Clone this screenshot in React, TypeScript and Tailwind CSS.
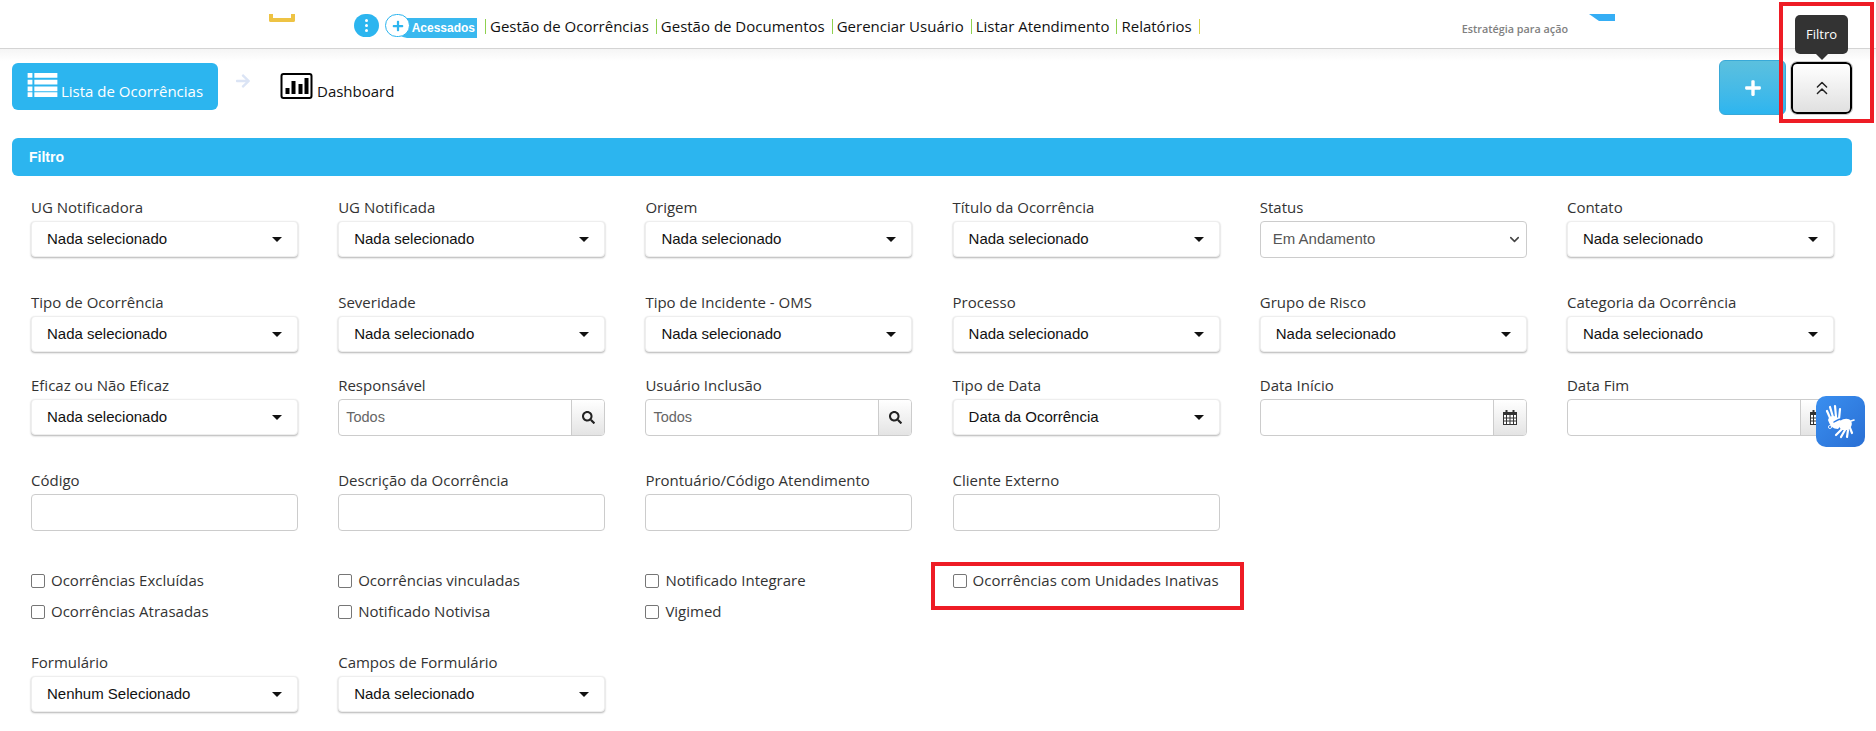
import { ChevronDown, ChevronsUp } from 'lucide-react';
import { FaArrowRight, FaPlus, FaSearch } from 'react-icons/fa';

const sans = "font-['Open_Sans',sans-serif]";
const arial = "font-['Liberation_Sans',sans-serif]";

type Field =
  | { kind: 'select'; label: string; value?: string }
  | { kind: 'native'; label: string; value: string }
  | { kind: 'search'; label: string }
  | { kind: 'date'; label: string }
  | { kind: 'text'; label: string };

const s = (label: string, value?: string): Field => ({ kind: 'select', label, value });

const rows: { height: string; fields: Field[] }[] = [
  {
    height: 'h-[95px]',
    fields: [
      s('UG Notificadora'),
      s('UG Notificada'),
      s('Origem'),
      s('Título da Ocorrência'),
      { kind: 'native', label: 'Status', value: 'Em Andamento' },
      s('Contato'),
    ],
  },
  {
    height: 'h-[83px]',
    fields: [
      s('Tipo de Ocorrência'),
      s('Severidade'),
      s('Tipo de Incidente - OMS'),
      s('Processo'),
      s('Grupo de Risco'),
      s('Categoria da Ocorrência'),
    ],
  },
  {
    height: 'h-[95px]',
    fields: [
      s('Eficaz ou Não Eficaz'),
      { kind: 'search', label: 'Responsável' },
      { kind: 'search', label: 'Usuário Inclusão' },
      s('Tipo de Data', 'Data da Ocorrência'),
      { kind: 'date', label: 'Data Início' },
      { kind: 'date', label: 'Data Fim' },
    ],
  },
  {
    height: 'h-[91px]',
    fields: [
      { kind: 'text', label: 'Código' },
      { kind: 'text', label: 'Descrição da Ocorrência' },
      { kind: 'text', label: 'Prontuário/Código Atendimento' },
      { kind: 'text', label: 'Cliente Externo' },
    ],
  },
];

const checks = [
  ['Ocorrências Excluídas', 'Ocorrências Atrasadas'],
  ['Ocorrências vinculadas', 'Notificado Notivisa'],
  ['Notificado Integrare', 'Vigimed'],
  ['Ocorrências com Unidades Inativas'],
];

const navItems = ['Gestão de Ocorrências', 'Gestão de Documentos', 'Gerenciar Usuário', 'Listar Atendimento', 'Relatórios'];

function CalendarIcon() {
  return (
    <svg width="14" height="15" viewBox="0 0 14 15" fill="none" stroke="#333" strokeWidth="1">
      <rect x="0.5" y="2.5" width="13" height="12" fill="white" />
      <path d="M0 2h14v3H0z" fill="#333" stroke="none" />
      <path d="M3.5 5v9M7 5v9M10.5 5v9M0 8h14M0 11h14" />
      <path d="M3.5 0v3M10.5 0v3" strokeWidth="2" />
    </svg>
  );
}

function Control({ field }: { field: Field }) {
  if (field.kind === 'select') {
    return (
      <button className={`flex h-[36px] w-full items-center justify-between rounded-[4px] border border-[#eeeeee] bg-white pl-[15px] pr-[15px] text-[15px] text-[#111] shadow-[0_1px_2px_rgba(0,0,0,0.3)] ${arial}`}>
        <span>{field.value ?? 'Nada selecionado'}</span>
        <span className="h-0 w-0 border-x-[5px] border-t-[5px] border-x-transparent border-t-[#111]" />
      </button>
    );
  }
  if (field.kind === 'native') {
    return (
      <div className={`flex h-[37px] w-full items-center justify-between rounded-[4px] border border-[#ccc] bg-white pl-[12px] pr-[4px] text-[15px] text-[#555] ${arial}`}>
        <span>{field.value}</span>
        <ChevronDown size={15} strokeWidth={2.5} className="text-[#444]" />
      </div>
    );
  }
  if (field.kind === 'text') {
    return <div className="h-[37px] w-full rounded-[4px] border border-[#ccc] bg-white" />;
  }
  return (
    <div className="flex h-[37px] w-full overflow-hidden rounded-[4px] border border-[#ccc] bg-white">
      <div className={`flex flex-1 items-center pl-[7px] text-[14.5px] text-[#666] ${arial}`}>{field.kind === 'search' ? 'Todos' : ''}</div>
      <div className="flex w-[33px] items-center justify-center border-l border-[#ccc] bg-gradient-to-b from-white to-[#e4e4e4]">
        {field.kind === 'search' ? <FaSearch size={13} className="text-[#222]" /> : <CalendarIcon />}
      </div>
    </div>
  );
}

function Label({ text }: { text: string }) {
  return <div className="mb-[4px] h-[20px] text-[15px] leading-[20px] text-[#333]">{text}</div>;
}

function Checkbox({ label }: { label: string }) {
  return (
    <label className={`flex h-[31px] items-center gap-[6px] text-[15px] leading-none text-[#333] ${sans}`}>
      <span className="h-[14px] w-[14px] rounded-[2px] border border-[#767676] bg-white" />
      {label}
    </label>
  );
}

function HandsIcon() {
  return (
    <svg width="49" height="51" viewBox="0 0 49 51" fill="none" stroke="white" strokeLinecap="round">
      <path d="M15 24 11 15M17 21 14 11M20 21 19 10M23 23 24 13" strokeWidth="2.2" />
      <path d="M12 24c2 6 5 9 10 9l5-6-6-6c-4-2-8-1-9 3z" fill="white" stroke="none" />
      <path d="M18 26c3-2 8-4 12-3" stroke="#2c7ce6" strokeWidth="1.5" />
      <path d="M24 25c4-3 9-3 11 0 2 3 0 7-3 9l-6 0c-3-2-4-6-2-9z" fill="white" stroke="none" />
      <path d="M26 33 20 39M29 34 25 41M32 34 31 41M34 32 36 37" strokeWidth="2.2" />
      <path d="M35 25 38 24" strokeWidth="1.6" />
      <circle cx="14" cy="31" r="1.6" strokeWidth="0.8" />
    </svg>
  );
}

export default function App() {
  return (
    <div className={`relative h-[731px] w-[1876px] overflow-hidden bg-white ${sans}`}>
      {/* top bar */}
      <header className="relative flex h-[49px] items-start border-b border-[#d4d4d4] pr-[12px]">
        <div className="ml-[269px] h-[8px] w-[26px] translate-y-[14px] rounded-b-[2px] border-x-[4px] border-b-[4px] border-[#eec344]" />
        <div className="ml-[59px] mt-[14px] flex h-[23px] w-[25px] items-center justify-center rounded-full bg-[#2cb5ef]">
          <span className="flex flex-col gap-[2px]">
            <i className="h-[3px] w-[3px] rounded-full bg-white" />
            <i className="h-[3px] w-[3px] rounded-full bg-white" />
            <i className="h-[3px] w-[3px] rounded-full bg-white" />
          </span>
        </div>
        <div className="relative ml-[6px] mt-[14px] flex h-[24px] w-[92px] items-end">
          <div className={`ml-[12px] flex h-[20px] w-[80px] items-center justify-end rounded-bl-[10px] bg-[#39b8ef] pr-[2px] text-[12px] font-bold text-white ${arial}`}>Acessados</div>
          <div className="absolute left-0 top-0 flex h-[23px] w-[25px] items-center justify-center rounded-full border border-[#2cb5ef] bg-white">
            <FaPlus size={12} className="text-[#2cb5ef]" />
          </div>
        </div>
        <nav className="ml-[8px] mt-[17px] flex items-center text-[15px] leading-[19px] text-[#111]">
          {navItems.map((item) => (
            <span key={item} className="mr-[7px] flex items-center">
              <i className="mr-[4px] h-[15px] w-[1px] bg-[#8fd14f]" />
              {item}
            </span>
          ))}
          <i className="h-[15px] w-[1px] bg-[#d9d44a]" />
        </nav>
        <div className="ml-auto mr-[249px] mt-[14px] flex items-start">
          <span className="mt-[9px] text-[10.8px] font-semibold leading-[11px] text-[#808080]">Estratégia para ação</span>
          <svg width="26" height="7" viewBox="0 0 26 7" className="ml-[21px]">
            <path d="M0 0h26v7H10z" fill="#35aef5" />
          </svg>
        </div>
      </header>
      <div className="h-[12px] bg-gradient-to-b from-[#f5f5f5] to-white" />

      {/* tabs and actions */}
      <div className="flex h-[77px] items-start pl-[12px] pr-[24px]">
        <div className="mt-[2px] flex h-[47px] w-[206px] items-start rounded-[6px] bg-[#2cb5ef] pl-[15px] pt-[10px] text-[15px] leading-[20px] text-white">
          <svg width="31" height="24" viewBox="0 0 31 25" fill="currentColor" className="mr-[3px] shrink-0">
            <path d="M0 0h5v5H0zM7 0h24v5H7zM0 7h5v5H0zM7 7h24v5H7zM0 14h5v5H0zM7 14h24v5H7zM0 20h5v5H0zM7 20h24v5H7z" />
          </svg>
          <span className="mt-[8px]">Lista de Ocorrências</span>
        </div>
        <FaArrowRight size={16} className="ml-[17px] mt-[12px] text-[#dbe4f5]" />
        <div className="ml-[29px] mt-[12px] flex items-start text-[15px] leading-[20px] text-[#111]">
          <svg width="33" height="26" viewBox="0 0 32 26" className="mr-[4px]">
            <rect x="1" y="1" width="30" height="24" rx="2" fill="white" stroke="black" strokeWidth="2" />
            <path d="M5 15h4v6H5zM11 8h4v13h-4zM18 11h4v10h-4zM24 5h4v16h-4z" fill="black" />
          </svg>
          <span className="mt-[8px]">Dashboard</span>
        </div>
        <button className="ml-auto -mt-[1px] flex h-[55px] w-[67px] items-center justify-center rounded-[6px] border border-[#39a9d8] bg-gradient-to-b from-[#5bc0de] to-[#2cb5ef] text-white">
          <FaPlus size={18} />
        </button>
        <button className="ml-[5px] mt-[1px] flex h-[52px] w-[61px] items-center justify-center rounded-[6px] border-2 border-black bg-gradient-to-b from-white to-[#e0e0e0] text-[#222] outline outline-1 outline-[#ccc]">
          <ChevronsUp size={22} strokeWidth={1.6} />
        </button>
      </div>

      {/* filter panel */}
      <div className={`ml-[12px] mr-[24px] flex h-[38px] items-center rounded-[6px] bg-[#2cb5ef] pl-[17px] text-[14px] font-bold text-white ${arial}`}>Filtro</div>

      <div className="pl-[31px] pt-[21px]">
        {rows.map((row, i) => (
          <div key={i} className={`grid grid-cols-[repeat(6,267px)] gap-x-[40.2px] ${row.height}`}>
            {row.fields.map((field) => (
              <div key={field.label}>
                <Label text={field.label} />
                <Control field={field} />
              </div>
            ))}
          </div>
        ))}

        <div className="grid h-[91px] grid-cols-[repeat(6,267px)] gap-x-[40.2px] pt-[4px]">
          {checks.map((col) => (
            <div key={col[0]}>
              {col.map((label) => (
                <Checkbox key={label} label={label} />
              ))}
            </div>
          ))}
        </div>

        <div className="grid grid-cols-[repeat(6,267px)] gap-x-[40.2px]">
          {[s('Formulário', 'Nenhum Selecionado'), s('Campos de Formulário')].map((field) => (
            <div key={field.label}>
              <Label text={field.label} />
              <Control field={field} />
            </div>
          ))}
        </div>
      </div>

      {/* overlays */}
      <div className="absolute left-[1795px] top-[15px] flex h-[39px] w-[53px] items-center justify-center rounded-[5px] bg-[#333] text-[13px] text-white">Filtro</div>
      <div className="absolute left-[1816px] top-[54px] h-0 w-0 border-x-[6px] border-t-[6px] border-x-transparent border-t-[#333]" />
      <div className="absolute left-[1779px] top-[2px] h-[121px] w-[95px] border-[4px] border-[#ee1c25]" />
      <div className="absolute left-[931px] top-[562px] h-[48px] w-[313px] border-[4px] border-[#ee1c25]" />
      <div className="absolute left-[1816px] top-[396px] h-[51px] w-[49px] rounded-[10px] bg-gradient-to-br from-[#3a8ff0] to-[#2a6fd4]">
        <HandsIcon />
      </div>
    </div>
  );
}
